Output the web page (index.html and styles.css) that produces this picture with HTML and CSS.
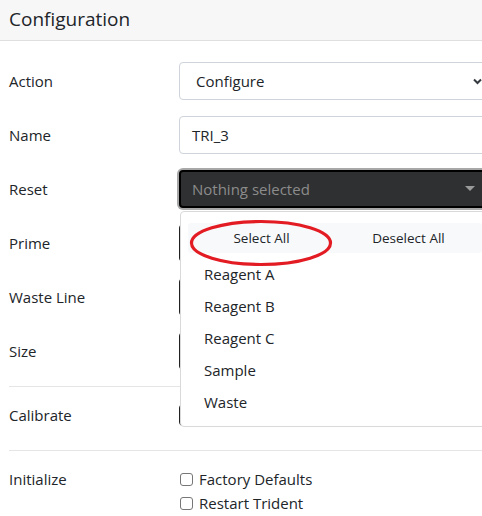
FILE: index.html
```html
<!DOCTYPE html>
<html>
<head>
<meta charset="utf-8">
<link rel="stylesheet" href="styles.css">
</head>
<body>
<div class="card">
  <div class="card-header">Configuration</div>
  <div class="card-body">
    <div class="row">
      <div class="label">Action</div>
      <div class="ctl">
        <div class="select">Configure
          <svg class="chev" width="9" height="7" viewBox="0 0 9 7"><path d="M1 1.5 L4.5 5 L8 1.5" fill="none" stroke="#343a40" stroke-width="2"/></svg>
        </div>
      </div>
    </div>
    <div class="row">
      <div class="label">Name</div>
      <div class="ctl"><div class="input">TRI_3</div></div>
    </div>
    <div class="row">
      <div class="label">Reset</div>
      <div class="ctl">
        <div class="picker focus">Nothing selected
          <svg class="caret" width="10" height="6" viewBox="0 0 10 6"><path d="M0 0 L10 0 L5 5 Z" fill="#9a9a9a"/></svg>
        </div>
        <div class="menu">
          <div class="actions">
            <div class="btn-group">
              <div class="btn">Select All</div>
              <div class="btn">Deselect All</div>
            </div>
          </div>
          <div class="item">Reagent A</div>
          <div class="item">Reagent B</div>
          <div class="item">Reagent C</div>
          <div class="item">Sample</div>
          <div class="item">Waste</div>
        </div>
        <svg class="ring" width="150" height="54" viewBox="0 0 150 54"><ellipse cx="75" cy="27" rx="69.5" ry="21.5" fill="none" stroke="#e31b23" stroke-width="3.2"/></svg>
      </div>
    </div>
    <div class="row">
      <div class="label">Prime</div>
      <div class="ctl"><div class="picker"></div></div>
    </div>
    <div class="row">
      <div class="label">Waste Line</div>
      <div class="ctl"><div class="picker"></div></div>
    </div>
    <div class="row">
      <div class="label">Size</div>
      <div class="ctl"><div class="picker"></div></div>
    </div>
    <div class="sep"></div>
    <div class="row row-cal">
      <div class="label">Calibrate</div>
      <div class="ctl"><div class="picker small"></div></div>
    </div>
    <div class="sep sep-last"></div>
    <div class="row row-init">
      <div class="label">Initialize</div>
      <div class="checks">
        <div class="check"><span class="box"></span>Factory Defaults</div>
        <div class="check"><span class="box"></span>Restart Trident</div>
      </div>
    </div>
  </div>
</div>
</body>
</html>
```
FILE: styles.css
```css
html, body {
  margin: 0;
  padding: 0;
  overflow: hidden;
  background: #fff;
}
body {
  font-family: "Open Sans", "Noto Sans", sans-serif;
  font-size: 15px;
  color: #212529;
}
.card {
  width: 560px;
}
.card-header {
  height: 40px;
  background: #f7f7f7;
  border-bottom: 1px solid #dfdfdf;
  padding-left: 9px;
  font-size: 19px;
  line-height: 38px;
  color: #212529;
}
.card-body {
  padding: 21px 0 0 9px;
}
.row {
  display: grid;
  grid-template-columns: 170px 1fr;
  height: 38px;
  margin-bottom: 16px;
  align-items: center;
}
.label {
  line-height: 24px;
}
.ctl {
  position: relative;
  height: 38px;
}
.select, .input, .picker {
  box-sizing: border-box;
  height: 38px;
  width: 330px;
  border: 1px solid #ced4da;
  border-radius: 4px;
  line-height: 36px;
  padding-left: 12px;
  position: relative;
  background: #fff;
}
.select {
  padding-left: 16px;
}
.chev {
  position: absolute;
  left: 293px;
  top: 15px;
}
.picker {
  background: #2f3031;
  border: 1px solid #222;
  color: #8c8c8c;
}
.picker.focus {
  border: 2px solid #000;
  box-shadow: 0 0 0 2px #a8a8a8;
  padding-left: 11px;
  line-height: 34px;
}
.caret {
  position: absolute;
  left: 284px;
  top: 14px;
}
.picker.small {
  height: 22px;
  margin-top: 8px;
}
.sep {
  height: 1px;
  background: #e5e5e5;
  margin: 0 0 9px 0;
}
.row-cal {
  margin-bottom: 16px;
}
.sep-last {
  margin-bottom: 0;
}
.row-init {
  margin-top: 16px;
  height: 48px;
  align-items: start;
}
.row-init .label {
  line-height: 24px;
}
.checks {
  display: flex;
  flex-direction: column;
}
.check {
  display: flex;
  align-items: center;
  height: 24px;
  padding-left: 1px;
}
.box {
  box-sizing: border-box;
  width: 13px;
  height: 13px;
  border: 1px solid #767676;
  border-radius: 3px;
  margin-right: 6px;
}
.menu {
  position: absolute;
  left: 1px;
  top: 41px;
  width: 310px;
  height: 216px;
  box-sizing: border-box;
  background: #fff;
  border: 1px solid #d9d9d9;
  border-radius: 4px;
  z-index: 5;
}
.actions {
  padding: 11px 7px 5px 7px;
}
.btn-group {
  display: grid;
  grid-template-columns: 1fr 1fr;
  height: 30px;
  background: #f8f9fa;
  border-radius: 3px;
}
.btn {
  text-align: center;
  line-height: 30px;
  font-size: 13.5px;
}
.item {
  height: 32px;
  line-height: 32px;
  padding-left: 23px;
}
.ring {
  position: absolute;
  left: 7px;
  top: 46px;
  z-index: 6;
}
```
